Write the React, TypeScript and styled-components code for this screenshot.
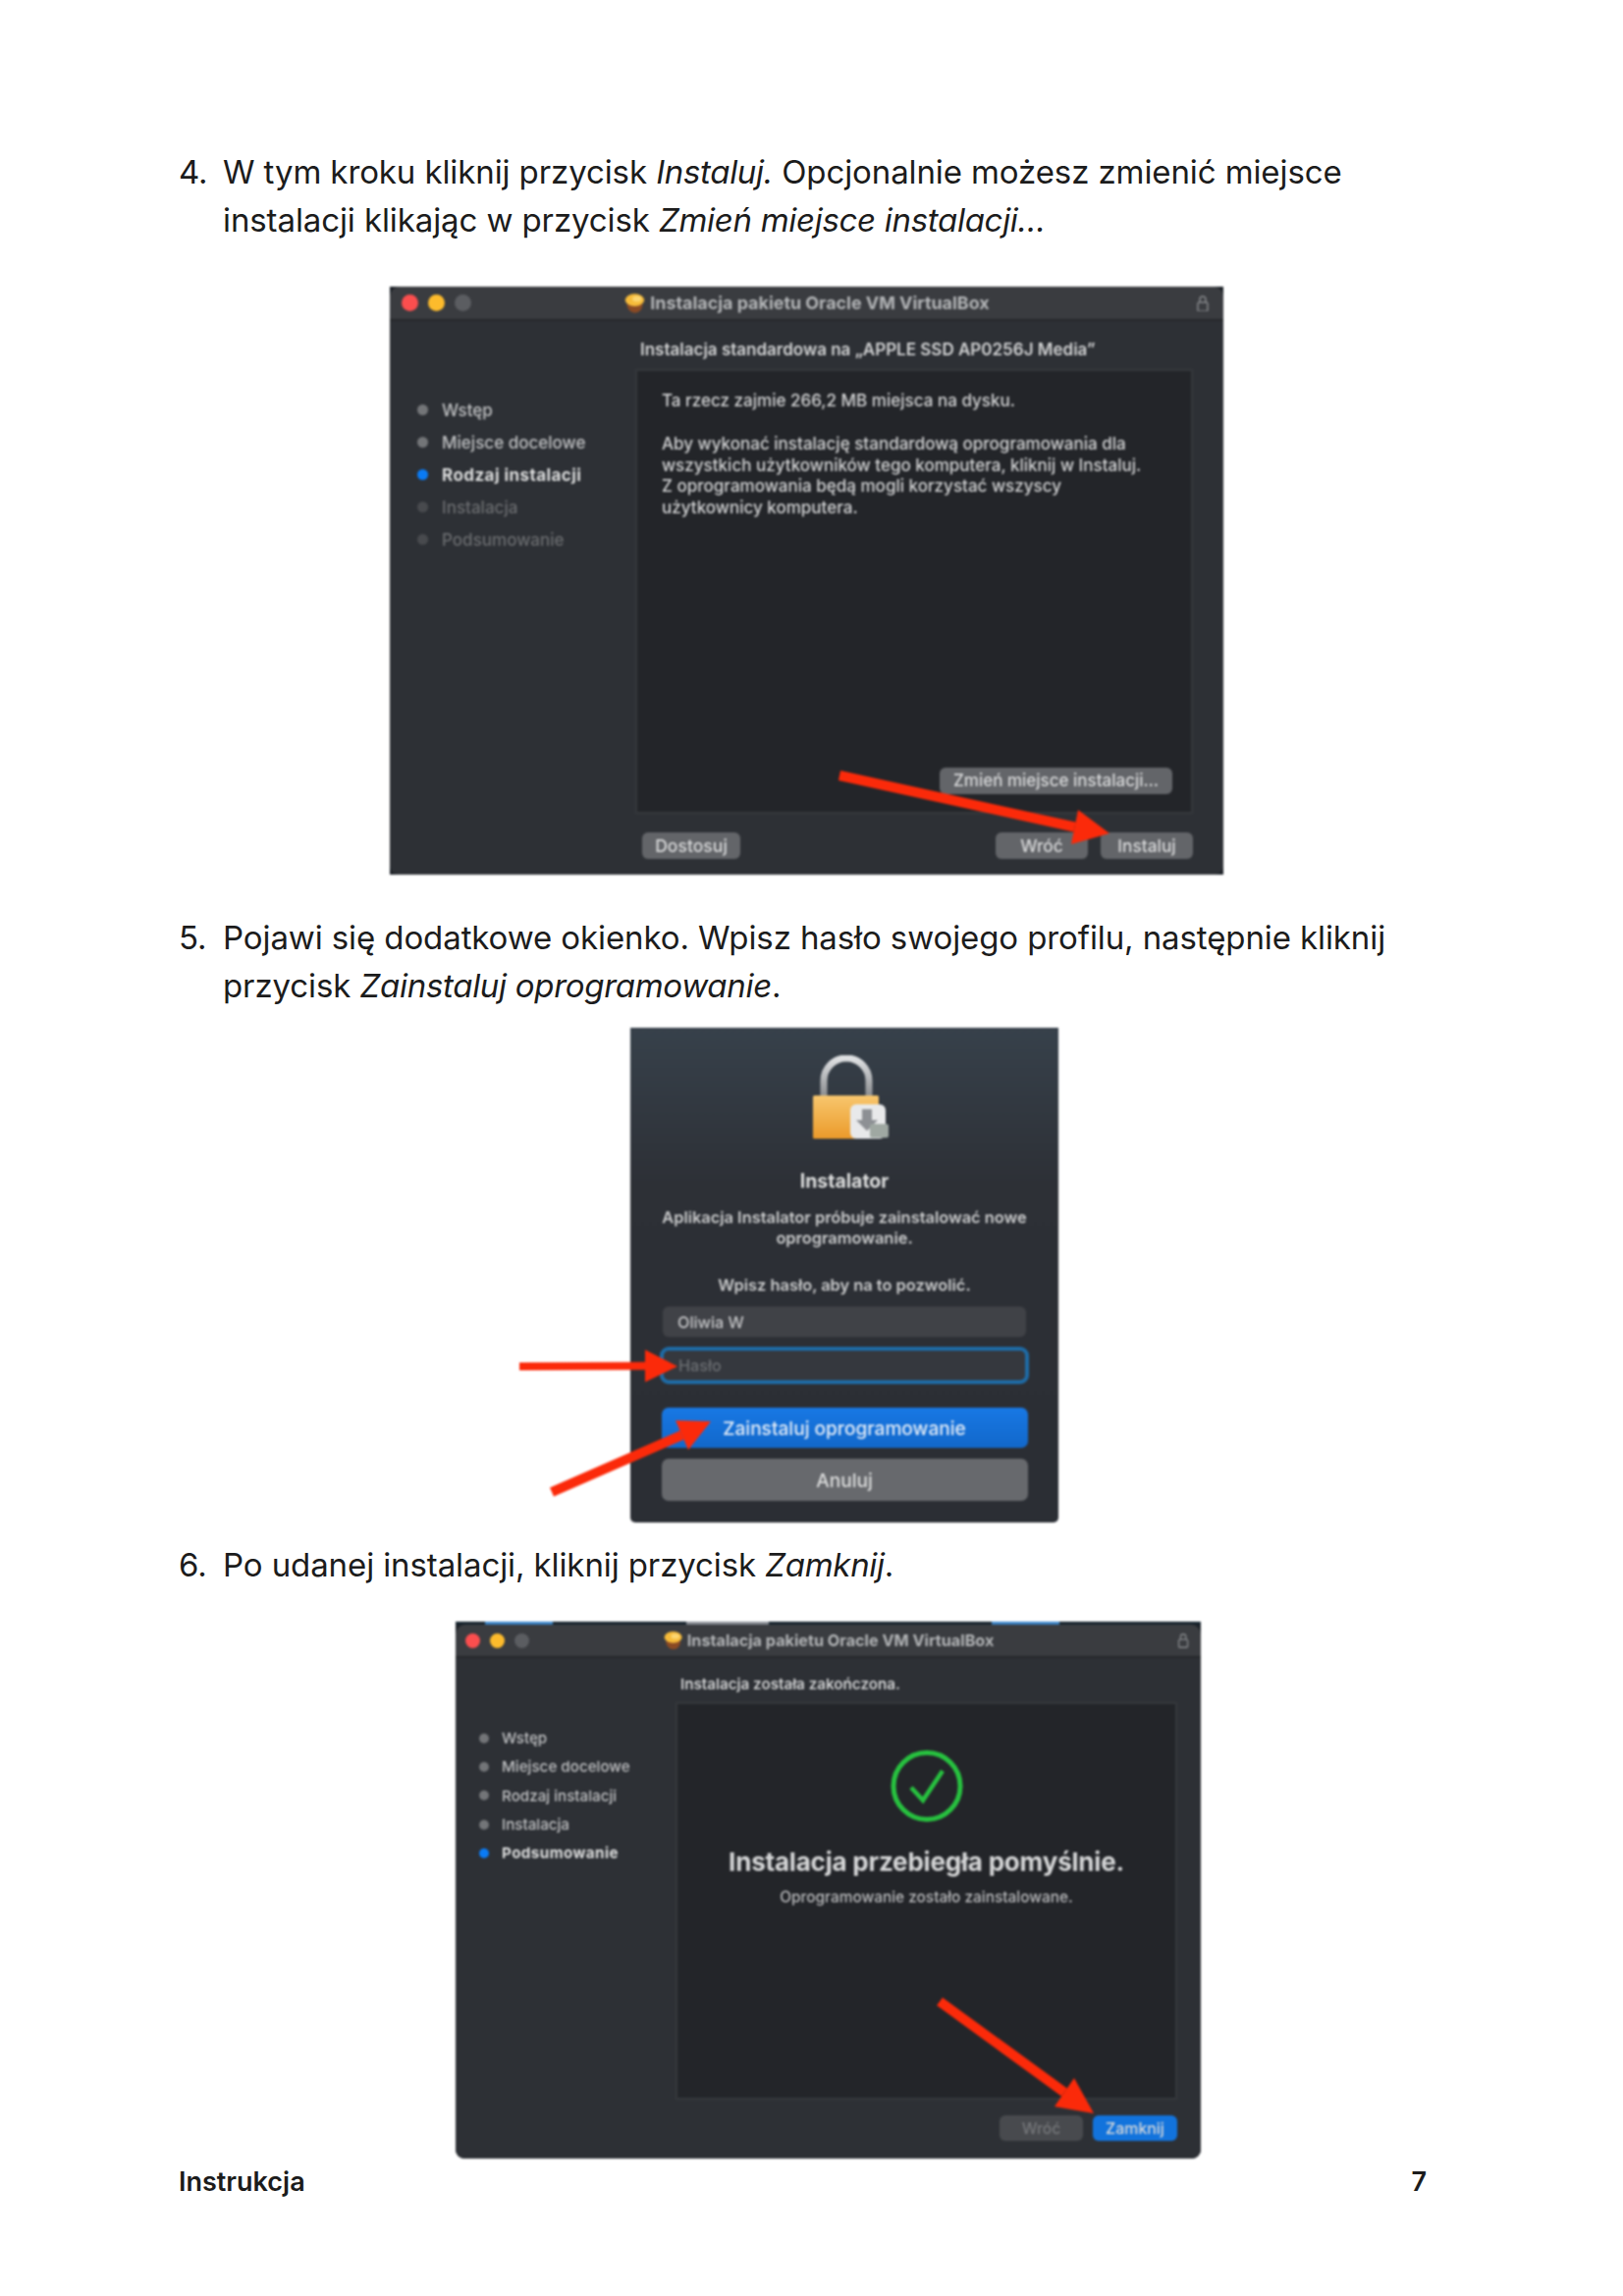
import React from "react";
import styled, { createGlobalStyle } from "styled-components";

const Global = createGlobalStyle`
  html, body { margin: 0; padding: 0; background: #fff; }
  body { font-family: Inter, "Noto Sans", sans-serif; color: #1c1c1c; }
`;

const Page = styled.main`
  width: 1653px;
  height: 2339px;
  box-sizing: border-box;
  padding: 151px 200px 0 182px;
  overflow: hidden;
`;

const StepRow = styled.div<{ $top: number }>`
  display: grid;
  grid-template-columns: 45px 1fr;
  margin-top: ${(p) => p.$top}px;
  font-size: 33px;
  line-height: 49px;
  font-weight: 400;
  letter-spacing: -0.1px;
  white-space: nowrap;

  i {
    letter-spacing: -0.3px;
  }
`;

const Shot = styled.figure<{ $left: number; $top: number; $w: number; $h: number; $bg: string; $radius: number }>`
  position: relative;
  margin: ${(p) => p.$top}px 0 0 ${(p) => p.$left}px;
  width: ${(p) => p.$w}px;
  height: ${(p) => p.$h}px;
  background: ${(p) => p.$bg};
  border-radius: 0 0 ${(p) => p.$radius}px ${(p) => p.$radius}px;
  display: flex;
  flex-direction: column;
  box-sizing: border-box;
  color: #d6d7d8;
  filter: blur(0.8px);
`;

const DesktopStrip = styled.div`
  height: 3px;
  flex: none;
  background: linear-gradient(
    90deg,
    #17242e 0 4%,
    #3c86c9 4% 13%,
    #17242e 13% 31%,
    #8a8f96 31% 42%,
    #17242e 42% 72%,
    #3c86c9 72% 81%,
    #17242e 81%
  );
`;

const TitleBar = styled.header<{ $h: number; $pad: number; $size: number }>`
  height: ${(p) => p.$h}px;
  flex: none;
  display: grid;
  grid-template-columns: 1fr auto 1fr;
  align-items: center;
  padding: 0 ${(p) => p.$pad}px;
  background: #3a3c40;
  border-bottom: 2px solid #26282b;
  border-radius: 10px 10px 0 0;
  box-sizing: border-box;
  font-size: ${(p) => p.$size}px;
  font-weight: 700;
  color: #b2b4b6;
`;

const Lights = styled.div<{ $gap: number }>`
  display: flex;
  gap: ${(p) => p.$gap}px;
`;

const Light = styled.span<{ $color: string; $d: number }>`
  width: ${(p) => p.$d}px;
  height: ${(p) => p.$d}px;
  border-radius: 50%;
  background: ${(p) => p.$color};
`;

const TitleText = styled.div`
  display: flex;
  align-items: center;
  gap: 4px;
  white-space: nowrap;
`;

const LockSlot = styled.div`
  justify-self: end;
  display: flex;
`;

const Body = styled.div`
  flex: 1;
  display: flex;
  min-height: 0;
  background: #2d3035;
  border-radius: 0 0 9px 9px;
`;

const Sidebar = styled.ul<{ $w: number; $top: number; $left: number; $rows: number; $size: number }>`
  list-style: none;
  margin: 0;
  width: ${(p) => p.$w}px;
  flex: none;
  box-sizing: border-box;
  padding: ${(p) => p.$top}px 0 0 ${(p) => p.$left}px;
  display: grid;
  grid-auto-rows: ${(p) => p.$rows}px;
  align-content: start;
  font-size: ${(p) => p.$size}px;
`;

const SideItem = styled.li<{ $state: "done" | "active" | "todo"; $gap: number }>`
  display: flex;
  align-items: center;
  gap: ${(p) => p.$gap}px;
  font-weight: ${(p) => (p.$state === "active" ? 700 : 500)};
  letter-spacing: ${(p) => (p.$state === "active" ? "0.42px" : "0")};
  color: ${(p) => (p.$state === "todo" ? "#6a6c6f" : p.$state === "active" ? "#dcdddd" : "#bfc0c2")};
  white-space: nowrap;
`;

const Dot = styled.span<{ $state: "done" | "active" | "todo"; $d: number }>`
  width: ${(p) => p.$d}px;
  height: ${(p) => p.$d}px;
  border-radius: 50%;
  flex: none;
  background: ${(p) => (p.$state === "active" ? "#0a7bf5" : p.$state === "todo" ? "#484a4e" : "#737578")};
`;

const Main = styled.div<{ $right: number }>`
  flex: 1;
  display: flex;
  flex-direction: column;
  padding: 0 ${(p) => p.$right}px 0 0;
  min-width: 0;
`;

const Heading = styled.div<{ $h: number; $size: number; $pt: number }>`
  height: ${(p) => p.$h}px;
  flex: none;
  box-sizing: border-box;
  display: flex;
  align-items: center;
  padding: ${(p) => p.$pt}px 0 0 5px;
  font-size: ${(p) => p.$size}px;
  font-weight: 600;
  color: #d0d1d2;
  white-space: nowrap;
`;

const ContentBox = styled.section<{ $h: number }>`
  height: ${(p) => p.$h}px;
  flex: none;
  box-sizing: border-box;
  background: #232529;
  border: 2px solid #35383c;
  display: flex;
  flex-direction: column;
`;

const LicenseBox = styled(ContentBox)`
  padding: 19px 19px 18px 25px;
  font-size: 17.05px;
  line-height: 21.8px;
  font-weight: 500;
  color: #d2d3d4;
`;

const Paragraph = styled.p`
  margin: 0 0 22px;
  white-space: nowrap;
`;

const SuccessBox = styled(ContentBox)`
  align-items: center;
  padding-top: 46px;
`;

const BigText = styled.h2`
  margin: 22px 0 0;
  font-size: 26px;
  line-height: 36px;
  font-weight: 700;
  letter-spacing: -0.2px;
  color: #d4d5d6;
  white-space: nowrap;
`;

const SubText = styled.p`
  margin: 8px 0 0;
  font-size: 15.4px;
  line-height: 20px;
  font-weight: 500;
  color: #b9babc;
  white-space: nowrap;
`;

const Buttons = styled.footer<{ $top: number; $left: number }>`
  flex: none;
  margin-top: ${(p) => p.$top}px;
  padding-left: ${(p) => p.$left}px;
  display: flex;
  align-items: center;
`;

const Button = styled.div<{ $w: number; $h: number; $size: number; $kind?: "default" | "primary" | "disabled"; $ml?: number }>`
  width: ${(p) => p.$w}px;
  height: ${(p) => p.$h}px;
  margin-left: ${(p) => p.$ml ?? 0}px;
  flex: none;
  display: flex;
  align-items: center;
  justify-content: center;
  border-radius: 6px;
  font-size: ${(p) => p.$size}px;
  font-weight: 500;
  white-space: nowrap;
  background: ${(p) => (p.$kind === "primary" ? "#1273dc" : p.$kind === "disabled" ? "#484a4e" : "#636569")};
  color: ${(p) => (p.$kind === "disabled" ? "#76787b" : "#d9dadb")};
`;

const ChangeButton = styled(Button)`
  align-self: flex-end;
  margin-top: auto;
`;

const Dialog = styled.div`
  display: flex;
  flex-direction: column;
  align-items: center;
  padding-top: 28px;
`;

const LockWrap = styled.div`
  display: flex;
  margin-left: 14px;
`;

const DialogTitle = styled.h3`
  margin: 31px 0 0;
  font-size: 19.5px;
  line-height: 24px;
  font-weight: 700;
  color: #dcdddd;
`;

const DialogText = styled.p<{ $top: number }>`
  margin: ${(p) => p.$top}px 0 0;
  font-size: 16.4px;
  line-height: 21px;
  font-weight: 600;
  text-align: center;
  color: #c9cacb;
  white-space: nowrap;
`;

const Field = styled.div<{ $focus?: boolean }>`
  box-sizing: border-box;
  width: ${(p) => (p.$focus ? 376 : 370)}px;
  height: ${(p) => (p.$focus ? 38 : 31)}px;
  margin-top: ${(p) => (p.$focus ? 10 : 11)}px;
  padding-left: 15px;
  display: flex;
  align-items: center;
  border-radius: ${(p) => (p.$focus ? 9 : 6)}px;
  background: ${(p) => (p.$focus ? "#35383e" : "#404247")};
  border: ${(p) => (p.$focus ? "4px solid #1e6ba6" : "none")};
  font-size: 16.2px;
  font-weight: 500;
  color: ${(p) => (p.$focus ? "#6a6d71" : "#c4c5c7")};
`;

const DialogButton = styled.div<{ $primary?: boolean }>`
  width: 373px;
  height: ${(p) => (p.$primary ? 41 : 43)}px;
  margin-top: ${(p) => (p.$primary ? 24 : 11)}px;
  display: flex;
  align-items: center;
  justify-content: center;
  border-radius: 7px;
  font-size: 19.1px;
  font-weight: 500;
  background: ${(p) => (p.$primary ? "linear-gradient(#1878e4, #1268cb)" : "#67696d")};
  color: ${(p) => (p.$primary ? "#e3ecf7" : "#dcdddd")};
`;

const Overlay = styled.svg`
  position: absolute;
  left: 0;
  top: 0;
  width: 100%;
  height: 100%;
  overflow: visible;
  pointer-events: none;
`;

const PageFooter = styled.footer`
  display: flex;
  justify-content: space-between;
  margin-top: 9px;
  font-size: 27px;
  line-height: 30px;
  font-weight: 600;
  color: #1c1c1c;
`;

type P = [number, number];

function Arrow({ from, tip, a, b, w }: { from: P; tip: P; a: P; b: P; w: number }) {
  const mid: P = [(a[0] + b[0]) / 2, (a[1] + b[1]) / 2];
  return (
    <Overlay>
      <line x1={from[0]} y1={from[1]} x2={mid[0]} y2={mid[1]} stroke="#fb2a0a" strokeWidth={w} />
      <polygon points={`${tip} ${a} ${b}`} fill="#fb2a0a" />
    </Overlay>
  );
}

function PackageIcon({ s }: { s: number }) {
  return (
    <svg width={s} height={s} viewBox="0 0 20 20">
      <path d="M3 11 C3 16 7 19 10 19 C14 19 17 16 17 11 Z" fill="#8a4a24" />
      <ellipse cx="10" cy="7.5" rx="8.5" ry="5.5" fill="#f6bb3a" />
      <ellipse cx="12" cy="6.5" rx="4" ry="2.5" fill="#fbd672" />
    </svg>
  );
}

function TinyLock({ s }: { s: number }) {
  return (
    <svg width={s} height={s} viewBox="0 0 14 18" fill="none" stroke="#85878a" strokeWidth="1.5">
      <rect x="2" y="8" width="10" height="9" rx="1.5" />
      <path d="M4 8 V5 a3 3 0 0 1 6 0 V8" />
    </svg>
  );
}

function PadlockIcon() {
  return (
    <svg width="78" height="85" viewBox="0 0 78 85">
      <defs>
        <linearGradient id="lockBody" x1="0" y1="0" x2="0" y2="1">
          <stop offset="0" stopColor="#f8c76e" />
          <stop offset="1" stopColor="#eb9a2a" />
        </linearGradient>
        <linearGradient id="shackle" x1="0" y1="0" x2="0" y2="1">
          <stop offset="0" stopColor="#dfe1e3" />
          <stop offset="1" stopColor="#8b8d90" />
        </linearGradient>
      </defs>
      <path d="M11 42 V26 a23 23 0 0 1 46 0 V42" fill="none" stroke="url(#shackle)" strokeWidth="7" />
      <rect x="0" y="41" width="67" height="44" rx="1.5" fill="url(#lockBody)" />
      <rect x="38" y="50" width="36" height="35" rx="6" fill="#e8e9ea" />
      <path d="M50 55 H60 V66 H66 L55 77 L44 66 H50 Z" fill="#8d9094" />
      <rect x="58" y="70" width="19" height="14" rx="2" fill="#9fa8a2" />
    </svg>
  );
}

function CheckIcon() {
  return (
    <svg width="74" height="75" viewBox="0 0 74 75" fill="none" stroke="#27c13f">
      <circle cx="37" cy="37.5" r="34" strokeWidth="5" />
      <path d="M21 39 L33 52 L53 22" strokeWidth="4.5" />
    </svg>
  );
}

type Step = [string, "done" | "active" | "todo"];

function Steps({ items, d, gap, w, top, left, rows, size }: { items: Step[]; d: number; gap: number; w: number; top: number; left: number; rows: number; size: number }) {
  return (
    <Sidebar $w={w} $top={top} $left={left} $rows={rows} $size={size}>
      {items.map(([label, state]) => (
        <SideItem key={label} $state={state} $gap={gap}>
          <Dot $state={state} $d={d} />
          {label}
        </SideItem>
      ))}
    </Sidebar>
  );
}

const firstSteps: Step[] = [
  ["Wstęp", "done"],
  ["Miejsce docelowe", "done"],
  ["Rodzaj instalacji", "active"],
  ["Instalacja", "todo"],
  ["Podsumowanie", "todo"],
];
const lastSteps: Step[] = [
  ["Wstęp", "done"],
  ["Miejsce docelowe", "done"],
  ["Rodzaj instalacji", "done"],
  ["Instalacja", "done"],
  ["Podsumowanie", "active"],
];

function WindowTitle({ h, pad, size, gap, d }: { h: number; pad: number; size: number; gap: number; d: number }) {
  return (
    <TitleBar $h={h} $pad={pad} $size={size}>
      <Lights $gap={gap}>
        <Light $color="#fb4e4e" $d={d} />
        <Light $color="#fdbb2c" $d={d} />
        <Light $color="#5b5d61" $d={d} />
      </Lights>
      <TitleText>
        <PackageIcon s={size + 5} />
        Instalacja pakietu Oracle VM VirtualBox
      </TitleText>
      <LockSlot>
        <TinyLock s={size} />
      </LockSlot>
    </TitleBar>
  );
}

export default function App() {
  return (
    <Page>
      <Global />
      <StepRow $top={0}>
        <span>4.</span>
        <span>
          W tym kroku kliknij przycisk <i>Instaluj.</i> Opcjonalnie możesz zmienić miejsce
          <br />
          instalacji klikając w przycisk <i>Zmień miejsce instalacji…</i>
        </span>
      </StepRow>

      <Shot $left={215} $top={43} $w={849} $h={599} $bg="#1c2127" $radius={0}>
        <WindowTitle h={35} pad={12} size={17.9} gap={10} d={17} />
        <Body>
          <Steps items={firstSteps} d={11} gap={14} w={250} top={74} left={28} rows={33} size={17.05} />
          <Main $right={31}>
            <Heading $h={49} $size={17} $pt={9}>
              Instalacja standardowa na „APPLE SSD AP0256J Media”
            </Heading>
            <LicenseBox $h={453}>
              <Paragraph>Ta rzecz zajmie 266,2 MB miejsca na dysku.</Paragraph>
              <Paragraph>
                Aby wykonać instalację standardową oprogramowania dla
                <br />
                wszystkich użytkowników tego komputera, kliknij w Instaluj.
                <br />Z oprogramowania będą mogli korzystać wszyscy
                <br />
                użytkownicy komputera.
              </Paragraph>
              <ChangeButton $w={237} $h={27} $size={17}>
                Zmień miejsce instalacji…
              </ChangeButton>
            </LicenseBox>
            <Buttons $top={19} $left={7}>
              <Button $w={100} $h={27} $size={17.6}>
                Dostosuj
              </Button>
              <Button $w={94} $h={27} $size={17.3} $ml={260}>
                Wróć
              </Button>
              <Button $w={94} $h={27} $size={17.3} $ml={13}>
                Instaluj
              </Button>
            </Buttons>
          </Main>
        </Body>
        <Arrow from={[458, 498]} tip={[733, 557]} a={[701, 533]} b={[694, 568]} w={10} />
      </Shot>

      <StepRow $top={40}>
        <span>5.</span>
        <span>
          Pojawi się dodatkowe okienko. Wpisz hasło swojego profilu, następnie kliknij
          <br />
          przycisk <i>Zainstaluj oprogramowanie</i>.
        </span>
      </StepRow>

      <Shot $left={460} $top={18} $w={436} $h={504} $bg="linear-gradient(#37414b, #2d3036 32%, #2b2e34)" $radius={5}>
        <Dialog>
          <LockWrap>
            <PadlockIcon />
          </LockWrap>
          <DialogTitle>Instalator</DialogTitle>
          <DialogText $top={15}>
            Aplikacja Instalator próbuje zainstalować nowe
            <br />
            oprogramowanie.
          </DialogText>
          <DialogText $top={27}>Wpisz hasło, aby na to pozwolić.</DialogText>
          <Field>Oliwia W</Field>
          <Field $focus>Hasło</Field>
          <DialogButton $primary>Zainstaluj oprogramowanie</DialogButton>
          <DialogButton>Anuluj</DialogButton>
        </Dialog>
        <Arrow from={[-113, 345]} tip={[48, 345]} a={[15, 328]} b={[15, 361]} w={8} />
        <Arrow from={[-80, 473]} tip={[82, 401]} a={[46, 400]} b={[59, 430]} w={10} />
      </Shot>

      <StepRow $top={19}>
        <span>6.</span>
        <span>
          Po udanej instalacji, kliknij przycisk <i>Zamknij</i>.
        </span>
      </StepRow>

      <Shot $left={282} $top={33} $w={759} $h={547} $bg="#1c2127" $radius={9}>
        <DesktopStrip />
        <WindowTitle h={34} pad={10} size={16.2} gap={10} d={15} />
        <Body>
          <Steps items={lastSteps} d={10} gap={13} w={224} top={67} left={24} rows={29.3} size={15.2} />
          <Main $right={24}>
            <Heading $h={45} $size={15.2} $pt={7}>
              Instalacja została zakończona.
            </Heading>
            <SuccessBox $h={405}>
              <CheckIcon />
              <BigText>Instalacja przebiegła pomyślnie.</BigText>
              <SubText>Oprogramowanie zostało zainstalowane.</SubText>
            </SuccessBox>
            <Buttons $top={16} $left={330}>
              <Button $w={85} $h={26} $size={15.7} $kind="disabled">
                Wróć
              </Button>
              <Button $w={86} $h={26} $size={15.9} $kind="primary" $ml={10}>
                Zamknij
              </Button>
            </Buttons>
          </Main>
        </Body>
        <Arrow from={[493, 387]} tip={[650, 501]} a={[630, 465]} b={[610, 494]} w={10} />
      </Shot>

      <PageFooter>
        <span>Instrukcja</span>
        <span>7</span>
      </PageFooter>
    </Page>
  );
}
